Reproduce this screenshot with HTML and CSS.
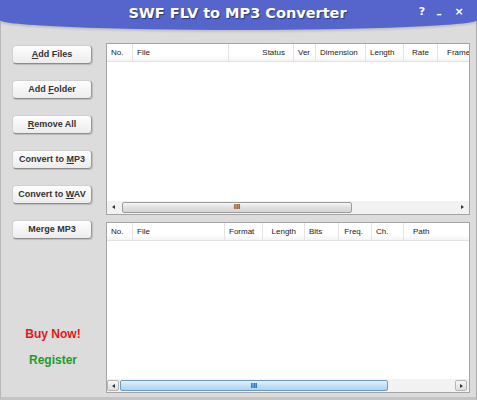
FILE: index.html
```html
<!DOCTYPE html>
<html lang="en">
<head>
  <meta charset="UTF-8">
  <title>SWF FLV to MP3 Converter</title>
  <link rel="stylesheet" href="styles.css">
</head>
<body>
  <div class="window">
    <div class="title-bar">
      <div class="title-text">SWF FLV to MP3 Converter</div>
      <div class="title-buttons">
        <span class="title-btn">?</span>
        <span class="title-btn title-min">&ndash;</span>
        <span class="title-btn">&times;</span>
      </div>
    </div>

    <div class="main">
      <div class="side">
        <button class="side-btn"><u>A</u>dd Files</button>
        <button class="side-btn">Add <u>F</u>older</button>
        <button class="side-btn"><u>R</u>emove All</button>
        <button class="side-btn">Convert to <u>M</u>P3</button>
        <button class="side-btn">Convert to <u>W</u>AV</button>
        <button class="side-btn">Merge MP3</button>

        <div class="side-links">
          <div class="buy-link">Buy Now!</div>
          <div class="register-link">Register</div>
        </div>
      </div>

      <div class="lists">
        <!-- 源文件列表 -->
        <div class="list-panel">
          <div class="list-header">
            <div class="col" style="width:26px">No.</div>
            <div class="col" style="width:96px">File</div>
            <div class="col col-right" style="width:65px">Status</div>
            <div class="col" style="width:22px">Ver</div>
            <div class="col" style="width:50px">Dimension</div>
            <div class="col" style="width:38px">Length</div>
            <div class="col col-right" style="width:34px">Rate</div>
            <div class="col col-last">Frame</div>
          </div>
          <div class="list-body"></div>
          <div class="hscroll">
            <span class="arrow arrow-left"></span>
            <div class="thumb thumb-gray" style="width:230px"><span class="grip">III</span></div>
            <div class="track"></div>
            <span class="arrow arrow-right"></span>
          </div>
        </div>

        <!-- 输出文件列表 -->
        <div class="list-panel">
          <div class="list-header">
            <div class="col" style="width:26px">No.</div>
            <div class="col" style="width:92px">File</div>
            <div class="col" style="width:38px">Format</div>
            <div class="col col-right" style="width:42px">Length</div>
            <div class="col" style="width:34px">Bits</div>
            <div class="col col-right" style="width:33px">Freq.</div>
            <div class="col" style="width:32px">Ch.</div>
            <div class="col col-last">Path</div>
          </div>
          <div class="list-body"></div>
          <div class="hscroll hscroll-blue">
            <span class="arrow-box"><span class="arrow arrow-left"></span></span>
            <div class="thumb thumb-blue" style="width:268px"><span class="grip grip-blue">III</span></div>
            <div class="track"></div>
            <span class="arrow-box"><span class="arrow arrow-right"></span></span>
          </div>
        </div>
      </div>
    </div>
  </div>
</body>
</html>
```

FILE: styles.css
```css
* {
  margin: 0;
  padding: 0;
  box-sizing: border-box;
  font-family: "Liberation Sans", Arial, sans-serif;
}

body {
  background-color: #dcdcdc;
  width: 477px;
  height: 400px;
  overflow: hidden;
}

.window {
  width: 477px;
  height: 400px;
  display: flex;
  flex-direction: column;
  background-color: #dcdcdc;
  border-left: 1px solid #b8b8b8;
  border-right: 1px solid #a8a8a8;
  border-bottom: 3px solid #c4c4c4;
}

.title-bar {
  position: relative;
  height: 30px;
  margin: 0 -1px;
  background-color: #5565cc;
  border-radius: 0 0 50% 50% / 0 0 10px 10px;
  box-shadow: 0 2px 2px rgba(0, 0, 0, 0.12);
  display: flex;
  justify-content: center;
  padding-top: 5px;
}

.title-text {
  font-family: "DejaVu Sans", Verdana, sans-serif;
  font-size: 14.5px;
  font-weight: bold;
  color: #fff;
  text-shadow: 1px 1px 1px rgba(0, 0, 0, 0.45);
  margin-left: -2px;
}

.title-buttons {
  position: absolute;
  right: 12px;
  top: 5px;
  display: flex;
  gap: 5px;
}

.title-btn {
  font-family: "DejaVu Sans", Verdana, sans-serif;
  font-size: 11px;
  font-weight: bold;
  color: #fff;
  width: 12px;
  text-align: center;
}

.title-min {
  padding-top: 3px;
  margin-right: 3px;
}

.main {
  flex: 1;
  display: flex;
  padding: 13px 6px 4px 0;
}

.side {
  width: 105px;
  flex-shrink: 0;
  display: flex;
  flex-direction: column;
  align-items: flex-start;
  padding: 2px 0 0 11px;
  gap: 16.5px;
}

.side-btn {
  width: 80px;
  height: 18.5px;
  font-size: 9px;
  font-weight: bold;
  color: #333;
  background: linear-gradient(#fefefe, #ececec);
  border: 1px solid #d0d0d0;
  border-right-color: #9a9a9a;
  border-bottom-color: #8c8c8c;
  border-radius: 4px;
  box-shadow: 1px 1px 1px rgba(0, 0, 0, 0.15);
  cursor: pointer;
}

.side-links {
  margin-top: auto;
  width: 82px;
  padding-bottom: 26px;
  display: flex;
  flex-direction: column;
  align-items: center;
  gap: 12px;
  font-size: 12px;
  font-weight: bold;
}

.buy-link {
  color: #e01818;
}

.register-link {
  color: #1f9a2c;
}

.lists {
  flex: 1;
  min-width: 0;
  display: flex;
  flex-direction: column;
  gap: 7px;
}

.list-panel {
  flex: 1;
  display: flex;
  flex-direction: column;
  background-color: #fff;
  border: 1px solid #a4a4a4;
  overflow: hidden;
}

.list-header {
  height: 18px;
  display: flex;
  background: linear-gradient(#fff, #fff 70%, #f4f4f4);
  border-bottom: 1px solid #e2e2e2;
}

.col {
  font-size: 8px;
  color: #222;
  line-height: 17px;
  padding: 0 4px;
  border-right: 1px solid #e4e4e4;
  white-space: nowrap;
  overflow: hidden;
  flex-shrink: 0;
}

.col-right {
  text-align: right;
  padding-right: 8px;
}

.col-last {
  flex: 1;
  flex-shrink: 1;
  min-width: 0;
  border-right: none;
  padding-left: 9px;
}

.list-body {
  flex: 1;
}

.hscroll {
  height: 13px;
  display: flex;
  align-items: center;
  background-color: #f2f2f2;
  padding: 0 1px;
}

.arrow {
  width: 0;
  height: 0;
  border-top: 2.5px solid transparent;
  border-bottom: 2.5px solid transparent;
}

.arrow-left {
  border-right: 3px solid #333;
  margin: 0 7px 0 4px;
}

.arrow-right {
  border-left: 3px solid #333;
  margin: 0 4px 0 6px;
}

.thumb {
  height: 11px;
  border-radius: 2px;
  display: flex;
  align-items: center;
  justify-content: center;
}

.thumb-gray {
  background: linear-gradient(#f6f6f6, #e0e0e0 50%, #d4d4d4);
  border: 1px solid #9c9c9c;
}

.grip {
  font-size: 8px;
  font-weight: bold;
  color: #4a4a4a;
  line-height: 8px;
}

.track {
  flex: 1;
}

.hscroll-blue {
  padding: 0;
}

.hscroll-blue .arrow-box {
  width: 12px;
  height: 11px;
  display: flex;
  align-items: center;
  justify-content: center;
  background: linear-gradient(#f8f8f8, #dedede);
  border: 1px solid #b4b4b4;
  border-radius: 2px;
}

.hscroll-blue .arrow {
  margin: 0;
}

.hscroll-blue .arrow-box:last-child {
  margin-right: 2px;
}

.thumb-blue {
  background: linear-gradient(#e4f2fc, #c4e2f6 50%, #a8d2f0);
  border: 1px solid #6e9cc0;
  margin-left: 1px;
}

.grip-blue {
  color: #2c4e6e;
}
```
